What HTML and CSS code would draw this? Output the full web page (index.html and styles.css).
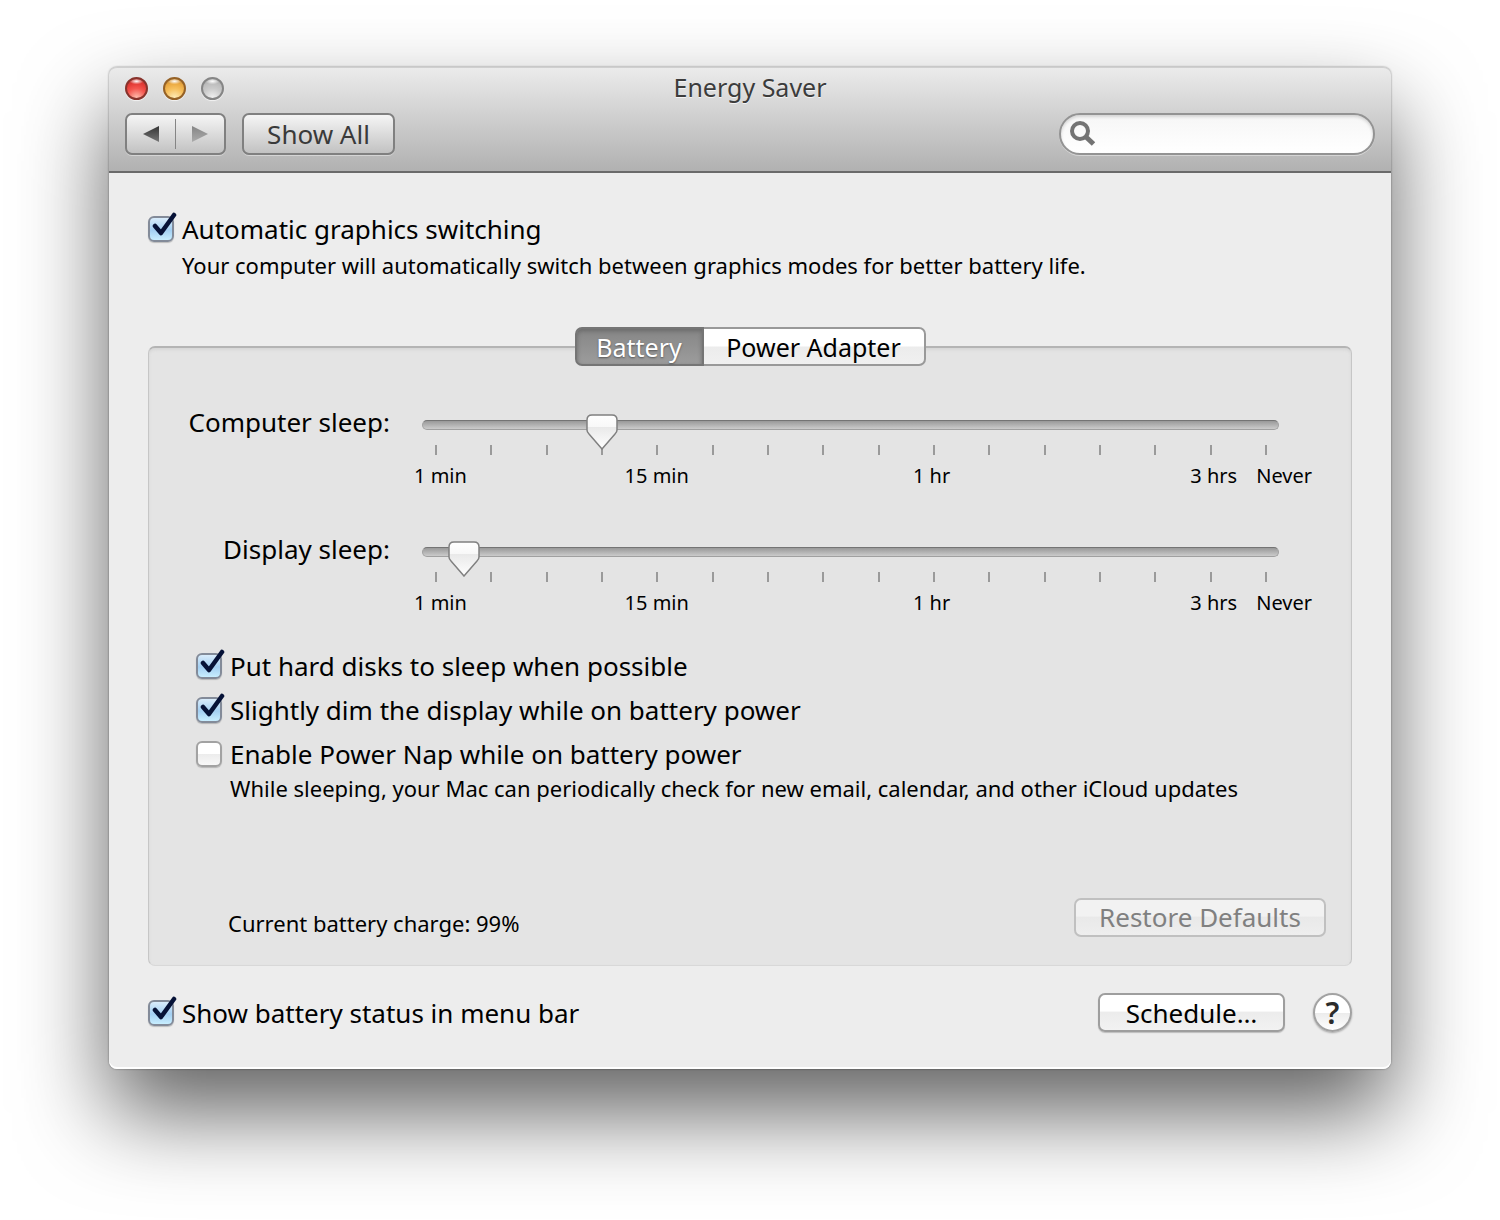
FILE: index.html
```html
<!DOCTYPE html>
<html lang="en">
<head>
  <meta charset="UTF-8" />
  <title>Energy Saver</title>
  <link rel="stylesheet" href="styles.css">
</head>
<body>
  <div class="window">
    <header class="titlebar">
      <div class="title-row">
        <div class="lights">
          <button type="button" class="light close" aria-label="Close"></button>
          <button type="button" class="light minimize" aria-label="Minimize"></button>
          <button type="button" class="light zoom" aria-label="Zoom" disabled></button>
        </div>
        <h1>Energy Saver</h1>
      </div>
      <div class="toolbar">
        <div class="nav">
          <button type="button" aria-label="Back">
            <svg width="17" height="18" viewBox="0 0 17 18">
              <linearGradient id="back" x2="0" y2="1"><stop stop-color="#333"/><stop offset="1" stop-color="#777"/></linearGradient>
              <path d="M0 9 L16 1 V17 Z" fill="url(#back)"/>
            </svg>
          </button>
          <button type="button" aria-label="Forward">
            <svg width="17" height="18" viewBox="0 0 17 18">
              <linearGradient id="forward" x2="0" y2="1"><stop stop-color="#858585"/><stop offset="1" stop-color="#ababab"/></linearGradient>
              <path d="M16 9 L0 1 V17 Z" fill="url(#forward)"/>
            </svg>
          </button>
        </div>
        <button type="button" class="show-all">Show All</button>
        <label class="search">
          <svg width="26" height="26" viewBox="0 0 26 26" fill="none" stroke="#737373">
            <circle cx="10" cy="10" r="8" stroke-width="4"/>
            <path d="M15.500 15.500 L23.500 23" stroke-width="5"/>
          </svg>
          <input type="search" aria-label="Search">
        </label>
      </div>
    </header>

    <main class="content">
      <label class="check"><input type="checkbox" checked> Automatic graphics switching</label>
      <p class="hint">Your computer will automatically switch between graphics modes for better battery life.</p>

      <section class="panel">
        <div class="tabs">
          <button type="button" class="active">Battery</button>
          <button type="button">Power Adapter</button>
        </div>

        <div class="slider-row">
          <label for="computer-sleep">Computer sleep:</label>
          <div class="slider">
            <div class="track"><input type="range" id="computer-sleep" min="0" max="15" step="0.5" value="3"></div>
            <div class="ticks"><i></i><i></i><i></i><i></i><i></i><i></i><i></i><i></i><i></i><i></i><i></i><i></i><i></i><i></i><i></i><i></i></div>
            <div class="scale"><span>1 min</span><span>15 min</span><span>1 hr</span><span>3 hrs</span><span>Never</span></div>
          </div>
        </div>

        <div class="slider-row">
          <label for="display-sleep">Display sleep:</label>
          <div class="slider">
            <div class="track"><input type="range" id="display-sleep" min="0" max="15" step="0.5" value="0.5"></div>
            <div class="ticks"><i></i><i></i><i></i><i></i><i></i><i></i><i></i><i></i><i></i><i></i><i></i><i></i><i></i><i></i><i></i><i></i></div>
            <div class="scale"><span>1 min</span><span>15 min</span><span>1 hr</span><span>3 hrs</span><span>Never</span></div>
          </div>
        </div>

        <div class="options">
          <label class="check"><input type="checkbox" checked> Put hard disks to sleep when possible</label>
          <label class="check"><input type="checkbox" checked> Slightly dim the display while on battery power</label>
          <label class="check"><input type="checkbox"> Enable Power Nap while on battery power</label>
          <p class="hint">While sleeping, your Mac can periodically check for new email, calendar, and other iCloud updates</p>
        </div>

        <div class="panel-footer">
          <span class="charge">Current battery charge: 99%</span>
          <button type="button" class="btn restore" disabled>Restore Defaults</button>
        </div>
      </section>

      <footer class="footer">
        <label class="check"><input type="checkbox" checked> Show battery status in menu bar</label>
        <button type="button" class="btn schedule">Schedule…</button>
        <button type="button" class="help" aria-label="Help">?</button>
      </footer>
    </main>
  </div>
</body>
</html>
```
FILE: styles.css
```css
* {
  box-sizing: border-box;
}
body {
  min-height: 100vh;
  margin: 0;
  padding: 67px 109px 150px;
  background: #fff;
  color: #000;
  font-family: 'Lucida Grande', 'Noto Sans', sans-serif;
  font-size: 26px;
  line-height: 32px;
}
button, input {
  margin: 0;
  font: inherit;
  color: inherit;
}
button {
  padding: 0;
  line-height: 30px;
}
.window {
  background: #ededed;
  border-radius: 8px;
  box-shadow: inset 0 -2px 0 #fff, 0 0 2px rgba(0, 0, 0, 0.5), 0 44px 88px rgba(0, 0, 0, 0.62);
}

/* title bar */
.titlebar {
  height: 106px;
  padding: 4px 16px 0;
  background: linear-gradient(#ebebeb, #b1b1b1);
  border-top: 1px solid #cfcfcf;
  border-bottom: 2px solid #6a6a6a;
  border-radius: 8px 8px 0 0;
}
.title-row {
  display: grid;
  grid-template-columns: 1fr auto 1fr;
  align-items: center;
  height: 32px;
}
h1 {
  margin: 0;
  padding-bottom: 2px;
  font-size: 25px;
  font-weight: normal;
  line-height: 30px;
  color: #3c3c3c;
  text-shadow: 0 1px 0 #f4f4f4;
}
.lights {
  display: flex;
  gap: 15px;
}
.light {
  width: 23px;
  height: 23px;
  border: 2px solid #777;
  border-radius: 50%;
  box-shadow: 0 1px 1px #f2f2f2;
}
.close {
  border-color: #88332c;
  background: radial-gradient(ellipse 7px 3px at 50% 12%, #fff, transparent), radial-gradient(circle at 50% 100%, #ffc0b0, #f4564f 45%, #e33a35 70%, #a8322c);
}
.minimize {
  border-color: #956126;
  background: radial-gradient(ellipse 7px 3px at 50% 12%, #fff, transparent), radial-gradient(circle at 50% 100%, #ffeebc, #f6bf5c 45%, #eaa840 70%, #b1772a);
}
.zoom {
  border-color: #858585;
  background: radial-gradient(ellipse 7px 3px at 50% 12%, #fff, transparent), radial-gradient(circle at 50% 100%, #f2f2f2, #cbcbcb 45%, #bdbdbd 70%, #9a9a9a);
}
.toolbar {
  display: flex;
  gap: 16px;
  padding-top: 9px;
}
.nav, .show-all {
  height: 42px;
  border: 2px solid #808080;
  border-radius: 7px;
  background: linear-gradient(#f5f5f5, #c2c2c2);
  box-shadow: 0 1px 0 #d5d5d5;
}
.nav {
  display: flex;
  align-items: center;
  width: 101px;
}
.nav button {
  flex: 1;
  display: flex;
  align-items: center;
  justify-content: center;
  height: 30px;
  border: none;
  background: none;
}
.nav button + button {
  border-left: 1px solid #858585;
}
.show-all {
  width: 153px;
  color: #3a3a3a;
}
.search {
  display: flex;
  align-items: center;
  gap: 8px;
  width: 316px;
  height: 42px;
  margin-left: auto;
  padding: 0 16px 0 9px;
  border: 2px solid #939393;
  border-radius: 21px;
  background: linear-gradient(#f6f6f6, #fff);
  box-shadow: inset 0 2px 3px #d4d4d4, 0 1px 0 #d5d5d5;
}
.search input {
  flex: 1;
  min-width: 0;
  border: none;
  outline: none;
  background: none;
}

/* content */
.content {
  padding: 40px 39px 37px;
}
.check {
  display: flex;
  align-items: center;
  gap: 8px;
  height: 32px;
  line-height: 30px;
}
.check input {
  appearance: none;
  position: relative;
  flex: none;
  width: 26px;
  height: 26px;
  border: 2px solid #a2a2a2;
  border-radius: 6px;
  background: linear-gradient(#fff 50%, #ececec 50%, #f8f8f8);
  box-shadow: 0 1px 1px rgba(0, 0, 0, 0.2);
}
.check input:checked {
  border-color: #838b99;
  background: linear-gradient(#d9ecfb, #a3cff2 55%, #c8eeff);
}
.check input:checked::after {
  content: '';
  position: absolute;
  left: 1px;
  top: -6px;
  width: 26px;
  height: 26px;
  background: url("data:image/svg+xml,%3Csvg xmlns='http://www.w3.org/2000/svg' viewBox='0 0 26 26'%3E%3Cpath d='M4 14 L10 21 L23 3' fill='none' stroke='%23061237' stroke-width='4.500' stroke-linecap='round' stroke-linejoin='round'/%3E%3C/svg%3E");
}
.hint {
  margin: 0;
  padding-left: 34px;
  font-size: 22px;
}
.content > .hint {
  margin-top: 4px;
}
.panel {
  margin-top: 65px;
  padding: 0 25px 26px 44px;
  border: 1px solid #c6c6c6;
  border-top: 2px solid #b4b4b4;
  border-bottom-color: #d8d8d8;
  border-radius: 7px;
  background: #e4e4e4;
  box-shadow: inset 0 2px 3px #d6d6d6;
}
.tabs {
  display: flex;
  justify-content: center;
  margin: -21px 0 41px -19px;
  font-size: 25px;
}
.tabs button {
  width: 222px;
  height: 39px;
  border: 2px solid #999;
  border-left: none;
  border-radius: 0 7px 7px 0;
  background: linear-gradient(#fff 48%, #ececec 52%, #f0f0f0);
}
.tabs .active {
  width: 129px;
  border: 2px solid #757575;
  border-radius: 7px 0 0 7px;
  background: linear-gradient(#868686, #9c9c9c);
  box-shadow: inset 0 2px 4px #6a6a6a;
  color: #fff;
  text-shadow: 0 1px 2px #555;
}

/* sliders */
.slider-row {
  display: flex;
  gap: 24px;
  height: 127px;
  padding-right: 14px;
}
.slider-row > label {
  display: flex;
  justify-content: flex-end;
  width: 197px;
  line-height: 30px;
  white-space: nowrap;
}
.slider {
  flex: 1;
}
.track {
  height: 10px;
  margin: 13px 33px 0 8px;
  border: 1px solid #a0a0a0;
  border-top-color: #747474;
  border-radius: 5px;
  background: linear-gradient(#999, #cbcbcb);
}
.track input {
  display: block;
  position: relative;
  appearance: none;
  width: calc(100% + 7px);
  height: 36px;
  margin: -7px 0 0 -3px;
  background: none;
}
.track input::-webkit-slider-thumb {
  appearance: none;
  width: 32px;
  height: 36px;
  background: url("data:image/svg+xml,%3Csvg xmlns='http://www.w3.org/2000/svg' viewBox='0 0 32 36'%3E%3ClinearGradient id='g' x2='0' y2='1'%3E%3Cstop stop-color='%23fff'/%3E%3Cstop offset='.35' stop-color='%23f8f8f8'/%3E%3Cstop offset='.36' stop-color='%23e9e9e9'/%3E%3Cstop offset='1' stop-color='%23fff'/%3E%3C/linearGradient%3E%3Cpath d='M6 1 H26 Q31 1 31 6 V16 Q31 18 29 20 L16 35 L3 20 Q1 18 1 16 V6 Q1 1 6 1 Z' fill='url(%23g)' stroke='%23808080' stroke-width='1.500'/%3E%3C/svg%3E");
}
.ticks {
  display: flex;
  justify-content: space-between;
  margin: 15px 45px 0 21px;
}
.ticks i {
  width: 2px;
  height: 10px;
  background: #9a9a9a;
}
.scale {
  display: grid;
  grid-template-columns: 211fr 289fr 278fr 66fr 54fr;
  margin-top: 5px;
  font-size: 20px;
  white-space: nowrap;
}

/* options under the sliders */
.options {
  display: flex;
  flex-direction: column;
  gap: 12px;
  margin: -11px 0 91px;
  padding-left: 3px;
}
.options .hint {
  margin-top: -10px;
}
.panel-footer {
  display: flex;
  align-items: center;
  justify-content: space-between;
  padding-left: 35px;
}
.charge {
  padding-top: 12px;
  font-size: 22px;
}
.btn {
  height: 39px;
  border: 2px solid #9e9e9e;
  border-radius: 7px;
  background: linear-gradient(#fff 45%, #ececec 50%, #f2f2f2);
  box-shadow: 0 1px 1px rgba(0, 0, 0, 0.2);
}
.restore {
  width: 252px;
  border-color: #c0c0c0;
  background: linear-gradient(#f2f2f2 45%, #e9e9e9 50%, #eee);
  box-shadow: none;
  color: #808080;
}
.footer {
  display: flex;
  align-items: center;
  margin-top: 27px;
}
.schedule {
  width: 187px;
  margin-left: auto;
}
.help {
  width: 39px;
  height: 39px;
  margin-left: 28px;
  border: 2px solid #a2a2a2;
  border-radius: 50%;
  background: linear-gradient(#fff 50%, #ececec 52%, #fff);
  box-shadow: 0 1px 2px rgba(0, 0, 0, 0.3);
  color: #2c2c2c;
  font-size: 30px;
  font-weight: 600;
}
```
